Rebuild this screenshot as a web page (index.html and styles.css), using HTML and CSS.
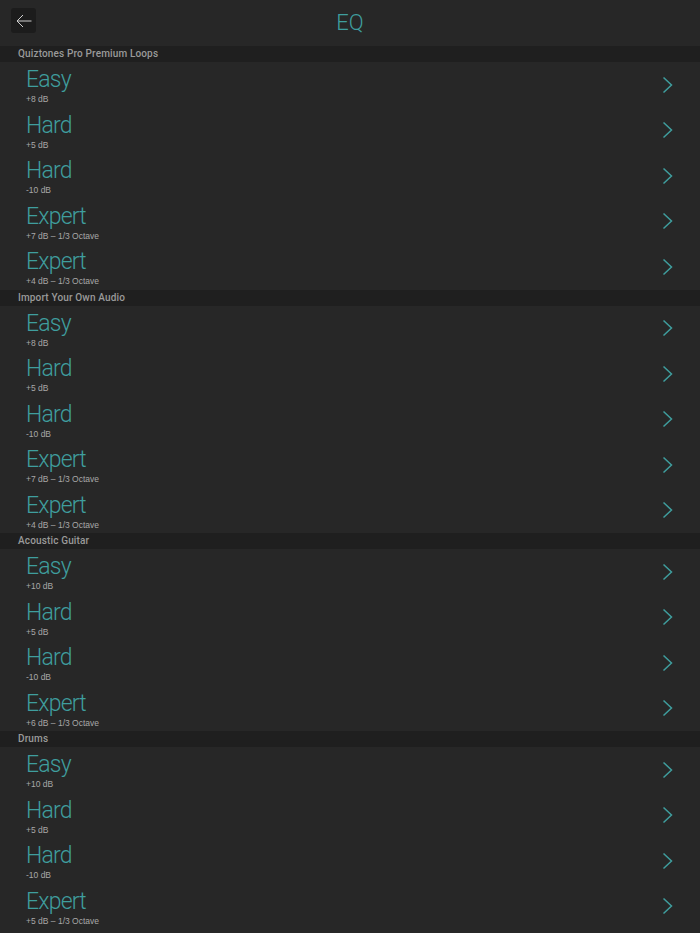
FILE: index.html
```html
<!DOCTYPE html>
<html>
<head>
<meta charset="utf-8">
<link rel="stylesheet" href="styles.css">
</head>
<body>
<div class="app">
  <header class="topbar">
    <button class="back" aria-label="Back">
      <svg width="16" height="14" viewBox="0 0 16 14"><path d="M15.5 7H1M7 1 1 7l6 6" fill="none" stroke="#cfcfcf" stroke-width="1"/></svg>
    </button>
    <h1 class="title">EQ</h1>
  </header>

  <section>
    <div class="sec-head">Quiztones Pro Premium Loops</div>
    <div class="row"><div class="txt"><div class="name">Easy</div><div class="sub">+8 dB</div></div><svg class="chev" viewBox="0 0 12 18"><path d="M1.5 1.5 9.5 9l-8 7.5" fill="none" stroke="#3f9e9e" stroke-width="1.5"/></svg></div>
    <div class="row"><div class="txt"><div class="name">Hard</div><div class="sub">+5 dB</div></div><svg class="chev" viewBox="0 0 12 18"><path d="M1.5 1.5 9.5 9l-8 7.5" fill="none" stroke="#3f9e9e" stroke-width="1.5"/></svg></div>
    <div class="row"><div class="txt"><div class="name">Hard</div><div class="sub">-10 dB</div></div><svg class="chev" viewBox="0 0 12 18"><path d="M1.5 1.5 9.5 9l-8 7.5" fill="none" stroke="#3f9e9e" stroke-width="1.5"/></svg></div>
    <div class="row"><div class="txt"><div class="name">Expert</div><div class="sub">+7 dB – 1/3 Octave</div></div><svg class="chev" viewBox="0 0 12 18"><path d="M1.5 1.5 9.5 9l-8 7.5" fill="none" stroke="#3f9e9e" stroke-width="1.5"/></svg></div>
    <div class="row"><div class="txt"><div class="name">Expert</div><div class="sub">+4 dB – 1/3 Octave</div></div><svg class="chev" viewBox="0 0 12 18"><path d="M1.5 1.5 9.5 9l-8 7.5" fill="none" stroke="#3f9e9e" stroke-width="1.5"/></svg></div>
  </section>

  <section>
    <div class="sec-head">Import Your Own Audio</div>
    <div class="row"><div class="txt"><div class="name">Easy</div><div class="sub">+8 dB</div></div><svg class="chev" viewBox="0 0 12 18"><path d="M1.5 1.5 9.5 9l-8 7.5" fill="none" stroke="#3f9e9e" stroke-width="1.5"/></svg></div>
    <div class="row"><div class="txt"><div class="name">Hard</div><div class="sub">+5 dB</div></div><svg class="chev" viewBox="0 0 12 18"><path d="M1.5 1.5 9.5 9l-8 7.5" fill="none" stroke="#3f9e9e" stroke-width="1.5"/></svg></div>
    <div class="row"><div class="txt"><div class="name">Hard</div><div class="sub">-10 dB</div></div><svg class="chev" viewBox="0 0 12 18"><path d="M1.5 1.5 9.5 9l-8 7.5" fill="none" stroke="#3f9e9e" stroke-width="1.5"/></svg></div>
    <div class="row"><div class="txt"><div class="name">Expert</div><div class="sub">+7 dB – 1/3 Octave</div></div><svg class="chev" viewBox="0 0 12 18"><path d="M1.5 1.5 9.5 9l-8 7.5" fill="none" stroke="#3f9e9e" stroke-width="1.5"/></svg></div>
    <div class="row"><div class="txt"><div class="name">Expert</div><div class="sub">+4 dB – 1/3 Octave</div></div><svg class="chev" viewBox="0 0 12 18"><path d="M1.5 1.5 9.5 9l-8 7.5" fill="none" stroke="#3f9e9e" stroke-width="1.5"/></svg></div>
  </section>

  <section>
    <div class="sec-head">Acoustic Guitar</div>
    <div class="row"><div class="txt"><div class="name">Easy</div><div class="sub">+10 dB</div></div><svg class="chev" viewBox="0 0 12 18"><path d="M1.5 1.5 9.5 9l-8 7.5" fill="none" stroke="#3f9e9e" stroke-width="1.5"/></svg></div>
    <div class="row"><div class="txt"><div class="name">Hard</div><div class="sub">+5 dB</div></div><svg class="chev" viewBox="0 0 12 18"><path d="M1.5 1.5 9.5 9l-8 7.5" fill="none" stroke="#3f9e9e" stroke-width="1.5"/></svg></div>
    <div class="row"><div class="txt"><div class="name">Hard</div><div class="sub">-10 dB</div></div><svg class="chev" viewBox="0 0 12 18"><path d="M1.5 1.5 9.5 9l-8 7.5" fill="none" stroke="#3f9e9e" stroke-width="1.5"/></svg></div>
    <div class="row"><div class="txt"><div class="name">Expert</div><div class="sub">+6 dB – 1/3 Octave</div></div><svg class="chev" viewBox="0 0 12 18"><path d="M1.5 1.5 9.5 9l-8 7.5" fill="none" stroke="#3f9e9e" stroke-width="1.5"/></svg></div>
  </section>

  <section>
    <div class="sec-head">Drums</div>
    <div class="row"><div class="txt"><div class="name">Easy</div><div class="sub">+10 dB</div></div><svg class="chev" viewBox="0 0 12 18"><path d="M1.5 1.5 9.5 9l-8 7.5" fill="none" stroke="#3f9e9e" stroke-width="1.5"/></svg></div>
    <div class="row"><div class="txt"><div class="name">Hard</div><div class="sub">+5 dB</div></div><svg class="chev" viewBox="0 0 12 18"><path d="M1.5 1.5 9.5 9l-8 7.5" fill="none" stroke="#3f9e9e" stroke-width="1.5"/></svg></div>
    <div class="row"><div class="txt"><div class="name">Hard</div><div class="sub">-10 dB</div></div><svg class="chev" viewBox="0 0 12 18"><path d="M1.5 1.5 9.5 9l-8 7.5" fill="none" stroke="#3f9e9e" stroke-width="1.5"/></svg></div>
    <div class="row"><div class="txt"><div class="name">Expert</div><div class="sub">+5 dB – 1/3 Octave</div></div><svg class="chev" viewBox="0 0 12 18"><path d="M1.5 1.5 9.5 9l-8 7.5" fill="none" stroke="#3f9e9e" stroke-width="1.5"/></svg></div>
  </section>
</div>
</body>
</html>
```

FILE: styles.css
```css
* { box-sizing: border-box; }
html, body {
  margin: 0;
  padding: 0;
  background: #272727;
  overflow: hidden;
}
body {
  font-family: "Roboto", "Liberation Sans", sans-serif;
  color: #aaa;
}
.app {
  width: 700px;
  height: 933px;
  overflow: hidden;
}
.topbar {
  height: 46px;
  display: flex;
  align-items: center;
  justify-content: center;
  position: relative;
}
.back {
  position: absolute;
  left: 11px;
  top: 8px;
  width: 25px;
  height: 25px;
  border: 0;
  border-radius: 3px;
  background: #1c1c1c;
  padding: 0;
  display: flex;
  align-items: center;
  justify-content: center;
}
.title {
  margin: 0;
  font-weight: 300;
  font-size: 22px;
  color: #3f9e9e;
  line-height: 1;
  padding-bottom: 1px;
}
.sec-head {
  height: 16px;
  background: #1f1f1f;
  padding-left: 18px;
  font-size: 10px;
  font-weight: 500;
  line-height: 16px;
  color: #9a9a9a;
  letter-spacing: 0.15px;
}
.row {
  height: 45.5px;
  display: flex;
  align-items: center;
  justify-content: space-between;
  padding: 0 26px 0 26px;
}
.txt {
  padding-top: 3px;
}
.name {
  font-size: 23px;
  font-weight: 300;
  line-height: 23px;
  color: #3f9e9e;
  letter-spacing: -0.8px;
}
.sub {
  margin-top: 3px;
  font-family: "Liberation Sans", "Roboto", sans-serif;
  font-size: 8.5px;
  line-height: 10px;
  color: #a8a8a8;
}
.chev {
  width: 12px;
  height: 18px;
}
```
